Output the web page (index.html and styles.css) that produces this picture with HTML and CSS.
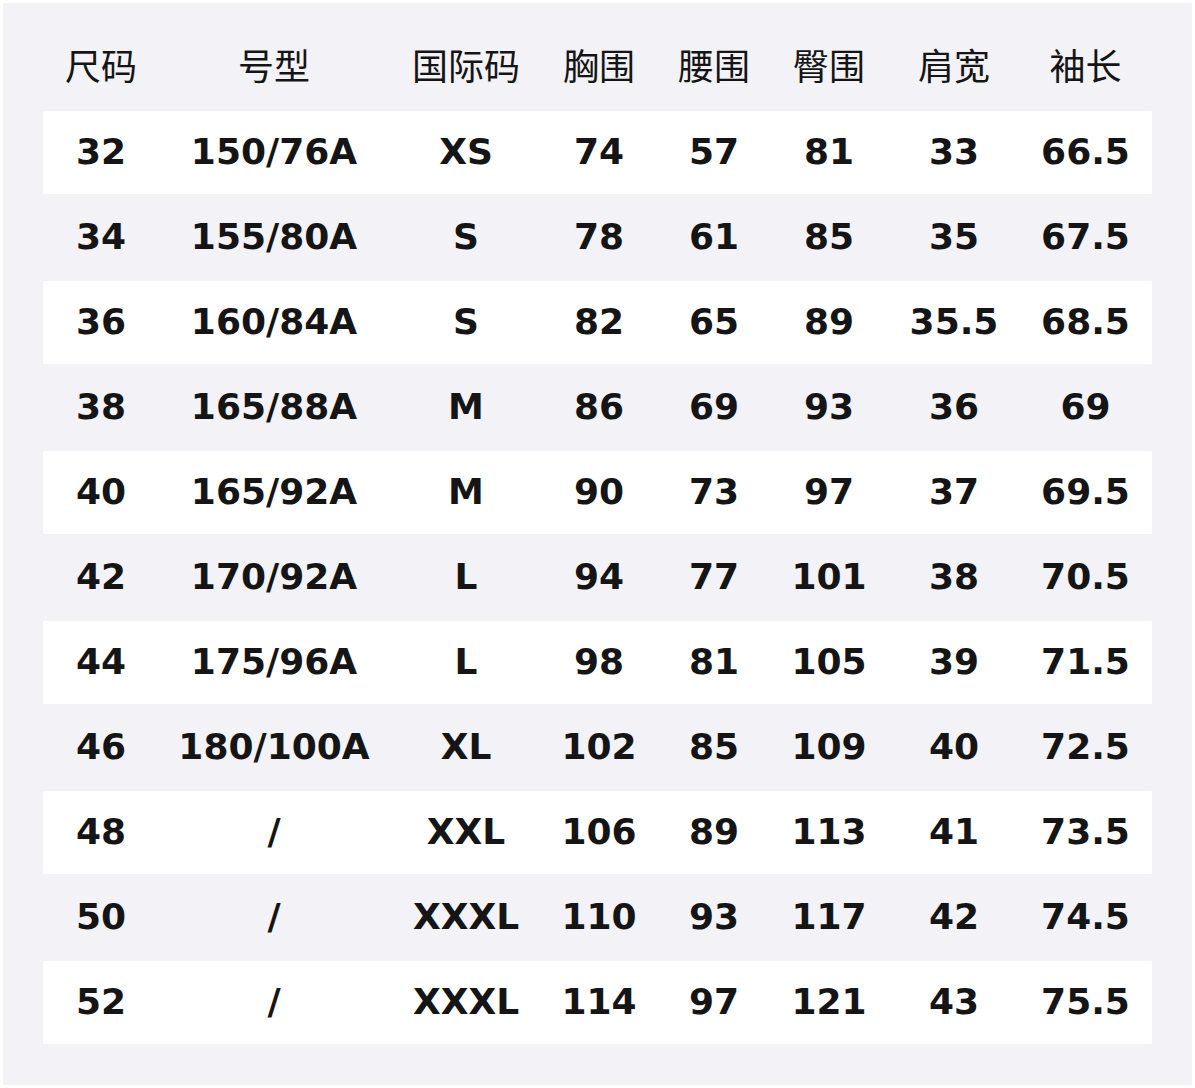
FILE: index.html
```html
<!DOCTYPE html>
<html lang="zh">
<head>
<meta charset="utf-8">
<link rel="stylesheet" href="styles.css">
</head>
<body>
<div class="frame">
  <div class="panel">
    <div class="row head">
      <div>尺码</div><div>号型</div><div>国际码</div><div>胸围</div><div>腰围</div><div>臀围</div><div>肩宽</div><div>袖长</div>
    </div>
    <div class="row body alt"><div>32</div><div>150/76A</div><div>XS</div><div>74</div><div>57</div><div>81</div><div>33</div><div>66.5</div></div>
    <div class="row body"><div>34</div><div>155/80A</div><div>S</div><div>78</div><div>61</div><div>85</div><div>35</div><div>67.5</div></div>
    <div class="row body alt"><div>36</div><div>160/84A</div><div>S</div><div>82</div><div>65</div><div>89</div><div>35.5</div><div>68.5</div></div>
    <div class="row body"><div>38</div><div>165/88A</div><div>M</div><div>86</div><div>69</div><div>93</div><div>36</div><div>69</div></div>
    <div class="row body alt"><div>40</div><div>165/92A</div><div>M</div><div>90</div><div>73</div><div>97</div><div>37</div><div>69.5</div></div>
    <div class="row body"><div>42</div><div>170/92A</div><div>L</div><div>94</div><div>77</div><div>101</div><div>38</div><div>70.5</div></div>
    <div class="row body alt"><div>44</div><div>175/96A</div><div>L</div><div>98</div><div>81</div><div>105</div><div>39</div><div>71.5</div></div>
    <div class="row body"><div>46</div><div>180/100A</div><div>XL</div><div>102</div><div>85</div><div>109</div><div>40</div><div>72.5</div></div>
    <div class="row body alt"><div>48</div><div>/</div><div>XXL</div><div>106</div><div>89</div><div>113</div><div>41</div><div>73.5</div></div>
    <div class="row body"><div>50</div><div>/</div><div>XXXL</div><div>110</div><div>93</div><div>117</div><div>42</div><div>74.5</div></div>
    <div class="row body alt"><div>52</div><div>/</div><div>XXXL</div><div>114</div><div>97</div><div>121</div><div>43</div><div>75.5</div></div>
  </div>
</div>
</body>
</html>
```
FILE: styles.css
```css
html, body {
  margin: 0;
  padding: 0;
  background: #ffffff;
}
.frame {
  padding: 3px;
  width: 1189px;
  height: 1082px;
}
.panel {
  background: #f2f2f7;
  height: 100%;
  padding: 0 40px 0 40px;
  box-sizing: border-box;
  color: #151515;
}
.row {
  display: grid;
  grid-template-columns: 116px 230px 154px 112px 118px 112px 138px 125px;
  width: 1109px;
}
.row > div {
  display: flex;
  align-items: center;
  justify-content: center;
  white-space: nowrap;
}
.head {
  height: 107px;
  font-family: "Noto Sans CJK SC", "Noto Sans", sans-serif;
  font-size: 36px;
  font-weight: 400;
  padding-top: 14px;
  box-sizing: border-box;
}
.body {
  height: 85px;
  font-family: "DejaVu Sans", sans-serif;
  font-weight: 700;
  font-size: 36px;
  box-sizing: border-box;
  border-top: 1px solid transparent;
  border-bottom: 1px solid transparent;
  padding-bottom: 2px;
}
.alt {
  background: #ffffff;
  background-clip: padding-box;
  border-radius: 2px;
}
```
